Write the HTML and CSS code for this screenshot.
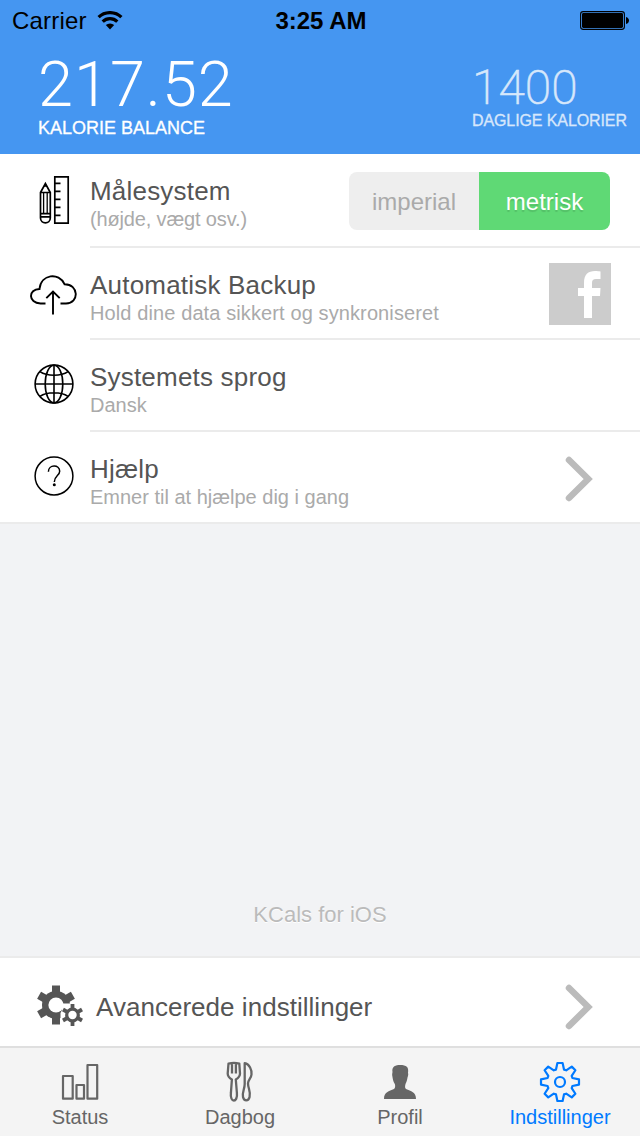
FILE: index.html
```
<!DOCTYPE html>
<html lang="da">
<head>
<meta charset="utf-8">
<title>KCals – Indstillinger</title>
<link rel="stylesheet" href="styles.css">
</head>
<body>
<div class="screen">
  <header class="header">
    <div class="statusbar">
      <div class="carrier">
        <span>Carrier</span>
        <svg class="wifi" width="26" height="20" viewBox="0 0 26 20">
          <path d="M1.600 6.200A16.400 16.400 0 0 1 24.400 6.200" fill="none" stroke="#000" stroke-width="3.200"/>
          <path d="M5.700 10.600A10.400 10.400 0 0 1 20.300 10.600" fill="none" stroke="#000" stroke-width="3.200"/>
          <path d="M8.800 14.100A6 6 0 0 1 17.200 14.100L13 18.400z"/>
        </svg>
      </div>
      <div class="time">3:25 AM</div>
      <svg class="battery" width="50" height="20" viewBox="0 0 50 20">
        <rect x=".600" y=".600" width="43.800" height="17.800" rx="2.600" fill="none" stroke="#000" stroke-width="1.100"/>
        <rect x="2" y="2" width="41" height="15" rx="1.400"/>
        <path d="M46 6C50 7 50 12 46 13z"/>
      </svg>
    </div>
    <div class="totals">
      <div class="balance">
        <div class="balance-value">217.52</div>
        <div class="balance-label">KALORIE BALANCE</div>
      </div>
      <div class="daily">
        <div class="daily-value">1400</div>
        <div class="daily-label">DAGLIGE KALORIER</div>
      </div>
    </div>
  </header>

  <main class="list">
    <section class="row row-first">
      <div class="icon">
        <svg width="60" height="60" viewBox="0 0 60 60" fill="none" stroke="#000" stroke-width="1.700">
          <path d="M24.800 8.800H38.200V55.200H24.800zM24.800 15.300H30.500M24.800 23.300H30.500M24.800 31.300H30.500M24.800 39.300H30.500M24.800 47.300H30.500"/>
          <path d="M10.500 24.500L15.400 15.500 20.300 24.500V50C20.300 56.500 10.500 56.500 10.500 50zM10.500 24.500H20.300M10.500 45.600H20.300M10.500 48.800H20.300"/>
          <path d="M13.600 24.500V45M17.200 24.500V45" stroke-width="1.300"/>
          <path d="M13.700 18.800L15.400 15.500 17.300 18.800z" fill="#000" stroke="none"/>
        </svg>
      </div>
      <div class="body"><div class="copy"><h2>Målesystem</h2><p class="tight">(højde, vægt osv.)</p></div>
        <div class="segmented"><span class="segment">imperial</span><span class="segment segment-on">metrisk</span></div>
      </div>
    </section>
    <section class="row">
      <div class="icon">
        <svg width="60" height="60" viewBox="0 0 60 60" fill="none" stroke="#000" stroke-width="1.900">
          <path d="M15.500 41.500H10.500C-2 41 -2 27.200 9.500 27C11 12 29 10 34.500 22.200C49 22 49.500 41.500 36 41.500H30.500M23 52.500V29M16.300 36.200L23 29.500 29.700 36.200"/>
        </svg>
      </div>
      <div class="body"><div class="copy"><h2>Automatisk Backup</h2><p class="wide">Hold dine data sikkert og synkroniseret</p></div>
        <svg class="facebook" width="62" height="62" viewBox="0 0 62 62">
          <path fill="#ccc" d="M0 0H62V62H0z"/>
          <path fill="#fff" d="M35 55V33H29V25H35V20C35 11.500 39 8 46 8C48.500 8 50 8.200 51.500 8.500V16H47C44.200 16 43 17 43 20V25H51.500L51 33H43V55z"/>
        </svg>
      </div>
    </section>
    <section class="row">
      <div class="icon">
        <svg width="60" height="60" viewBox="0 0 60 60" fill="none" stroke="#000" stroke-width="1.600">
          <circle cx="24" cy="30" r="18.900"/>
          <ellipse cx="24" cy="30" rx="8.800" ry="18.900"/>
          <path d="M5 30H43M24 11V49M10 17.600C17 22.400 31 22.400 38 17.600M10 42.400C17 37.600 31 37.600 38 42.400"/>
        </svg>
      </div>
      <div class="body"><div class="copy"><h2>Systemets sprog</h2><p>Dansk</p></div></div>
    </section>
    <section class="row row-last">
      <div class="icon">
        <svg width="60" height="60" viewBox="0 0 60 60" fill="none" stroke="#000" stroke-width="1.500">
          <circle cx="24" cy="30" r="18.900"/>
          <path d="M18.400 25.800C18.400 18.200 29.700 18.200 29.700 25.200C29.700 29.600 24.300 29.600 24.300 36"/>
          <circle cx="24.300" cy="38.800" r="1.500" fill="#000" stroke="none"/>
        </svg>
      </div>
      <div class="body"><div class="copy"><h2>Hjælp</h2><p>Emner til at hjælpe dig i gang</p></div>
        <svg class="chevron" width="28" height="46" viewBox="0 0 28 46"><path d="M4 4L23.200 23 4 42" fill="none" stroke="#bbb" stroke-width="6.500" stroke-linecap="round"/></svg>
      </div>
    </section>
  </main>

  <div class="filler"><span class="product">KCals for iOS</span></div>

  <section class="advanced">
    <svg class="gears" width="50" height="44" viewBox="-19 -21 50 44">
      <g fill="#555">
        <circle r="14"/>
        <path id="tooth" d="M-4 -11V-19.500H4V-11z"/>
        <use href="#tooth" transform="rotate(60)"/><use href="#tooth" transform="rotate(120)"/><use href="#tooth" transform="rotate(180)"/><use href="#tooth" transform="rotate(240)"/><use href="#tooth" transform="rotate(300)"/>
      </g>
      <circle r="7.600" fill="#fff"/>
      <path fill="#fff" d="M5 -1.500H30V23H7V17L4.500 14V8L6 5z"/>
      <g transform="translate(16.500 10)">
        <circle r="5.800" fill="none" stroke="#555" stroke-width="3.200"/>
        <g fill="#555">
          <path id="small-tooth" d="M-1.900 -6V-11H1.900V-6z"/>
          <use href="#small-tooth" transform="rotate(60)"/><use href="#small-tooth" transform="rotate(120)"/><use href="#small-tooth" transform="rotate(180)"/><use href="#small-tooth" transform="rotate(240)"/><use href="#small-tooth" transform="rotate(300)"/>
        </g>
      </g>
    </svg>
    <h2>Avancerede indstillinger</h2>
    <svg class="chevron" width="28" height="46" viewBox="0 0 28 46"><path d="M4 4L23.200 23 4 42" fill="none" stroke="#bbb" stroke-width="6.500" stroke-linecap="round"/></svg>
  </section>

  <nav class="tabbar">
    <a class="tab">
      <svg width="44" height="44" viewBox="0 0 44 44" fill="none" stroke="#666" stroke-width="2.200" stroke-linejoin="round">
        <path d="M5 16H14.700V38.700H5zM18.500 25H26V38.700H18.500zM29.500 5H39.200V38.700H29.500z"/>
      </svg>
      <span>Status</span>
    </a>
    <a class="tab">
      <svg width="44" height="44" viewBox="0 0 44 44" fill="none" stroke="#666" stroke-width="2.300" stroke-linejoin="round">
        <path d="M10.500 3.500Q16 2.300 21.300 3.500L22 13.500Q22 17 17.800 19.500L18.900 33C20 43 11.700 43 12.900 33L13.900 19.500Q9.700 17 9.700 13.500zM14 3.500V13.500M17.900 3.500V13.500"/>
        <path d="M26.700 3.200C31.500 4 34 10 33.500 14.500C33.300 18 30 20 30 23.500C30 28 33 32 31.600 37C30.500 41.500 26 41.500 25 37C24 32 26.700 29 26.700 24z"/>
      </svg>
      <span>Dagbog</span>
    </a>
    <a class="tab">
      <svg width="44" height="44" viewBox="0 0 44 44" fill="#666">
        <path d="M6 39C6 31.500 11 31.500 16 29C17.500 28 17.300 25 16.800 24C15 21 14.800 19 14.300 16C14 14.500 14.300 13.500 14.500 12C13.500 6 18 5 22 5C28.500 5 31 7 30 13C30.500 14 30.200 16 29.500 17.500C29.200 20 28.500 22 27.500 24C27 26 26.700 28 28 29C33 31.500 38 31.500 38 39z"/>
      </svg>
      <span>Profil</span>
    </a>
    <a class="tab tab-on">
      <svg width="44" height="44" viewBox="-22 -22 44 44" fill="none" stroke="#007aff" stroke-width="2.200" stroke-linejoin="round">
        <circle r="5" stroke-width="2.200"/>
        <path d="M-4 -12.400L-2.600 -19H2.600L4 -12.400L6.200 -11.700L11.740 -15.400L15.400 -11.740L11.700 -6.200L12.400 -4L19 -2.600V2.600L12.400 4L11.700 6.200L15.400 11.740L11.740 15.400L6.200 11.700L4 12.400L2.600 19H-2.600L-4 12.400L-6.200 11.700L-11.740 15.400L-15.400 11.740L-11.700 6.200L-12.400 4L-19 2.600V-2.600L-12.400 -4L-11.700 -6.200L-15.400 -11.740L-11.740 -15.400L-6.200 -11.700z"/>
      </svg>
      <span>Indstillinger</span>
    </a>
  </nav>
</div>
</body>
</html>
```
FILE: styles.css
```
* { box-sizing: border-box; }
body { margin: 0; font-family: "Liberation Sans", Arial, sans-serif; color: #555; }
h2, p { margin: 0; font-weight: 400; white-space: nowrap; }
svg { display: block; flex: none; }
.screen { width: 640px; height: 1136px; display: flex; flex-direction: column; background: #f2f3f5; overflow: hidden; }

.header { height: 154px; flex: none; background: #4596f1; }
.statusbar { height: 40px; padding: 1px 10px 0 12px; display: grid; grid-template-columns: 1fr auto 1fr; align-items: center; font-size: 24px; color: #000; }
.carrier { display: flex; align-items: center; gap: 10px; letter-spacing: .2px; }
.time { font-weight: 700; }
.battery { justify-self: end; }
.totals { height: 114px; display: flex; justify-content: space-between; padding: 0 12px 0 38px; color: #fff; }
.balance-value { padding-top: 14px; font: 300 63px/62px Roboto, sans-serif; letter-spacing: 1px; height: 77px; white-space: nowrap; }
.balance-label { font-size: 18px; line-height: 22px; -webkit-text-stroke: .3px #fff; white-space: nowrap; }
.daily { width: 156px; opacity: .78; }
.daily-value { padding-top: 24px; font: 200 48px/48px Roboto, sans-serif; -webkit-text-stroke: .5px #fff; height: 71px; }
.daily-label { font-size: 16px; line-height: 20px; letter-spacing: -.1px; -webkit-text-stroke: .3px #fff; white-space: nowrap; }

.list { flex: none; background: #fff; border-bottom: 2px solid #ebebeb; }
.row { height: 92px; display: flex; }
.row-first { height: 94px; }
.icon { width: 60px; margin-left: 30px; padding-top: 14px; flex: none; }
.body { flex: 1; display: flex; justify-content: space-between; border-bottom: 2px solid #ebebeb; padding-right: 29px; }
.row-last { height: 90px; }
.row-last .body { border-bottom: 0; }
.copy { padding-top: 22px; }
h2 { font-size: 26px; line-height: 30px; letter-spacing: .2px; }
.copy p { font-size: 20px; line-height: 26px; color: #aaa; }
.copy .tight { letter-spacing: -.15px; }
.copy .wide { letter-spacing: .11px; }
.segmented { display: flex; width: 261px; height: 58px; margin: 18px 1px 0 0; border-radius: 8px; overflow: hidden; font-size: 24px; line-height: 60px; text-align: center; }
.segment { width: 130px; background: #eee; color: #aaa; }
.segment-on { width: 131px; background: #5fd975; color: #fff; text-shadow: 0 2px 1px rgba(0, 0, 0, .12); }
.facebook { margin-top: 15px; }
.chevron { margin: 24px 18px 0 0; }

.filler { flex: 1; display: flex; align-items: flex-end; justify-content: center; padding-bottom: 27px; }
.product { font-size: 22px; line-height: 28px; color: #bbb; text-shadow: 0 1px 0 #fff; }
.advanced { height: 90px; flex: none; display: flex; align-items: center; background: #fff; border-top: 2px solid #ebebeb; padding: 0 47px 0 37px; }
.advanced h2 { flex: 1; padding: 10px 0 0 9px; letter-spacing: .03px; }
.gears { margin-top: 7px; }
.advanced .chevron { margin: 10px 0 0; }

.tabbar { height: 90px; flex: none; display: grid; grid-template-columns: repeat(4, 1fr); background: #f4f4f4; border-top: 2px solid #dfdfdf; color: #666; }
.tab { display: flex; flex-direction: column; align-items: center; padding-top: 12px; font-size: 20px; line-height: 26px; }
.tab-on { color: #007aff; }
```
